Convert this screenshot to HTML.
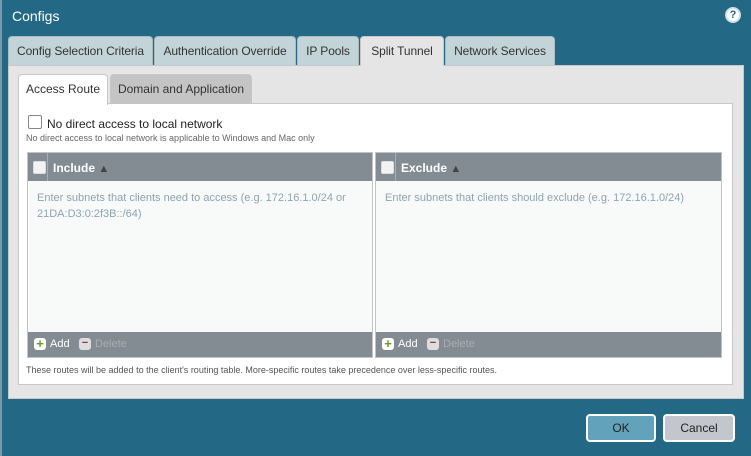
<!DOCTYPE html>
<html><head><style>
*{box-sizing:border-box;margin:0;padding:0}
body{width:751px;height:456px;background:#236986;font-family:"Liberation Sans",sans-serif;position:relative;overflow:hidden}
.a{position:absolute}
.title{left:12px;top:8px;color:#fff;font-size:14px}
.help{left:725px;top:7px;width:16px;height:16px;border-radius:50%;background:#fff;border:2px solid #cfe0e8;color:#236986;font-size:11px;font-weight:bold;text-align:center;line-height:12px}
.tab{top:36px;height:29px;background:#c3d4d9;border:1px solid #a9bcc3;border-bottom:none;border-radius:4px 4px 0 0;font-size:12px;color:#333;text-align:center;line-height:28px;letter-spacing:-0.1px}
.tab.on{background:#e5e5e5;height:30px}
.panel{left:8px;top:65px;width:736px;height:334px;background:#e5e5e5;border:1px solid #c8c8c8}
.itab{top:74px;height:30px;border:1px solid #c8c8c8;border-bottom:none;border-radius:4px 4px 0 0;font-size:12px;color:#333;text-align:center;line-height:29px}
.white{left:18px;top:103px;width:715px;height:282px;background:#fff;border:1px solid #c8c8c8}
.cb{width:13px;height:13px;border:1px solid #888;background:#fff;border-radius:2px}
.tbl{top:152px;height:206px;background:#f8fafa;border:1px solid #c0c4c6}
.hd{position:absolute;left:0;right:0;top:0;height:28px;background:#848c93;color:#fff;font-size:12px;font-weight:bold}
.ft{position:absolute;left:0;right:0;bottom:0;height:25px;background:#848c93;font-size:11px}
.ph{position:absolute;left:9px;top:37px;color:#8fa3ad;font-size:11px;line-height:16px}
.btn{top:414px;height:28px;border:2px solid #fff;border-radius:4px;font-size:12px;text-align:center;line-height:24px;color:#222}
</style></head><body>
<div class="a" style="left:0;top:0;width:2px;height:456px;background:#7a98a6"></div>
<div class="a title">Configs</div>
<div class="a help">?</div>
<div class="a tab" style="left:8px;width:145px">Config Selection Criteria</div>
<div class="a tab" style="left:154px;width:142px">Authentication Override</div>
<div class="a tab" style="left:297px;width:62px">IP Pools</div>
<div class="a tab" style="left:360px;width:84px">Split Tunnel</div>
<div class="a tab" style="left:445px;width:110px">Network Services</div>
<div class="a panel"></div>
<div class="a tab on" style="left:360px;width:84px;border-color:#c8c8c8">Split Tunnel</div>
<div class="a white"></div>
<div class="a itab" style="left:18px;width:90px;background:#fff;height:31px">Access Route</div>
<div class="a itab" style="left:110px;width:142px;background:#c4c4c4">Domain and Application</div>
<div class="a cb" style="left:28px;top:115px;width:14px;height:14px"></div>
<div class="a" style="left:47px;top:117px;font-size:12px;color:#222">No direct access to local network</div>
<div class="a" style="left:26px;top:133px;font-size:9px;color:#666">No direct access to local network is applicable to Windows and Mac only</div>

<div class="a tbl" style="left:27px;width:346px">
 <div class="hd"><div class="a cb" style="left:5px;top:8px;border-color:#ddd;background:#f3f3f3"></div><div class="a" style="left:19px;top:0;width:1px;height:28px;background:#a8aeb3"></div><span class="a" style="left:25px;top:8px">Include <span style="font-size:11px;color:#444">▲</span></span></div>
 <div class="ph">Enter subnets that clients need to access (e.g. 172.16.1.0/24 or<br>21DA:D3:0:2f3B::/64)</div>
 <div class="ft"><span class="a" style="left:6px;top:6px;width:12px;height:12px;background:#fff;border-radius:3px;color:#6a9a1f;font-weight:bold;font-size:13px;line-height:12px;text-align:center">+</span><span class="a" style="left:22px;top:6px;color:#fff">Add</span><span class="a" style="left:51px;top:6px;width:12px;height:12px;background:#ddd;border-radius:3px;color:#8a3a2a;font-weight:bold;line-height:11px;text-align:center">−</span><span class="a" style="left:67px;top:6px;color:#a7adb2">Delete</span></div>
</div>
<div class="a tbl" style="left:375px;width:347px">
 <div class="hd"><div class="a cb" style="left:5px;top:8px;border-color:#ddd;background:#f3f3f3"></div><div class="a" style="left:19px;top:0;width:1px;height:28px;background:#a8aeb3"></div><span class="a" style="left:25px;top:8px">Exclude <span style="font-size:11px;color:#444">▲</span></span></div>
 <div class="ph">Enter subnets that clients should exclude (e.g. 172.16.1.0/24)</div>
 <div class="ft"><span class="a" style="left:6px;top:6px;width:12px;height:12px;background:#fff;border-radius:3px;color:#6a9a1f;font-weight:bold;font-size:13px;line-height:12px;text-align:center">+</span><span class="a" style="left:22px;top:6px;color:#fff">Add</span><span class="a" style="left:51px;top:6px;width:12px;height:12px;background:#ddd;border-radius:3px;color:#8a3a2a;font-weight:bold;line-height:11px;text-align:center">−</span><span class="a" style="left:67px;top:6px;color:#a7adb2">Delete</span></div>
</div>
<div class="a" style="left:26px;top:365px;font-size:9px;color:#555">These routes will be added to the client's routing table. More-specific routes take precedence over less-specific routes.</div>
<div class="a btn" style="left:586px;width:70px;background:#63a2bb">OK</div>
<div class="a btn" style="left:663px;width:72px;background:#c3c6cd">Cancel</div>
</body></html>
